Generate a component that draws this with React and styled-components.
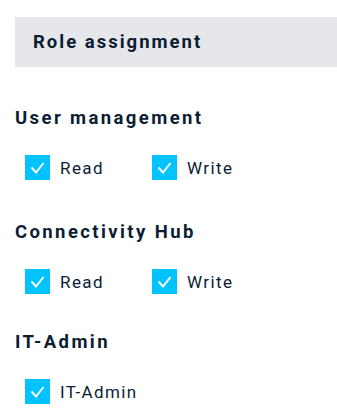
import React from "react";
import styled, { createGlobalStyle } from "styled-components";

const Global = createGlobalStyle`
  html, body { margin: 0; padding: 0; background: #ffffff; }
  body { font-family: Roboto, "Noto Sans", sans-serif; color: #0b1d33; }
`;

const Page = styled.div`
  padding: 17px 0 0 15px;
  display: flex;
  flex-direction: column;
`;

const Header = styled.div`
  height: 50px;
  background: #e6e7ea;
  display: flex;
  align-items: center;
  padding-left: 18px;
  font-size: 18.5px;
  font-weight: 700;
  letter-spacing: 2px;
  color: #0b1d33;
`;

const Section = styled.section`
  margin-top: ${(p) => p.$top}px;
  display: flex;
  flex-direction: column;
`;

const Title = styled.h3`
  margin: 0;
  font-size: 18.5px;
  line-height: 20px;
  font-weight: 700;
  letter-spacing: 2.4px;
  color: #0b1d33;
`;

const Row = styled.div`
  margin-top: 27px;
  padding-left: 10px;
  display: flex;
`;

const Item = styled.label`
  width: 127px;
  display: flex;
  align-items: center;
  gap: 10px;
  font-size: 17px;
  letter-spacing: 1.4px;
  color: #0b1d33;
  height: 25px;
`;

const Box = styled.span`
  width: 25px;
  height: 25px;
  flex: none;
  background: #00c3ff;
  display: flex;
  align-items: center;
  justify-content: center;
`;

const Check = () => (
  <Box>
    <svg width="25" height="25" viewBox="0 0 25 25">
      <path d="M6.5 12.5 L11 17.5 L18.5 8" fill="none" stroke="#fff" strokeWidth="2" />
    </svg>
  </Box>
);

const sections = [
  { title: "User management", items: ["Read", "Write"], top: 41 },
  { title: "Connectivity Hub", items: ["Read", "Write"], top: 42 },
  { title: "IT-Admin", items: ["IT-Admin"], top: 38 },
];

export default function App() {
  return (
    <>
      <Global />
      <Page>
        <Header>Role assignment</Header>
        {sections.map((s) => (
          <Section key={s.title} $top={s.top}>
            <Title>{s.title}</Title>
            <Row>
              {s.items.map((it) => (
                <Item key={it}>
                  <Check />
                  {it}
                </Item>
              ))}
            </Row>
          </Section>
        ))}
      </Page>
    </>
  );
}
